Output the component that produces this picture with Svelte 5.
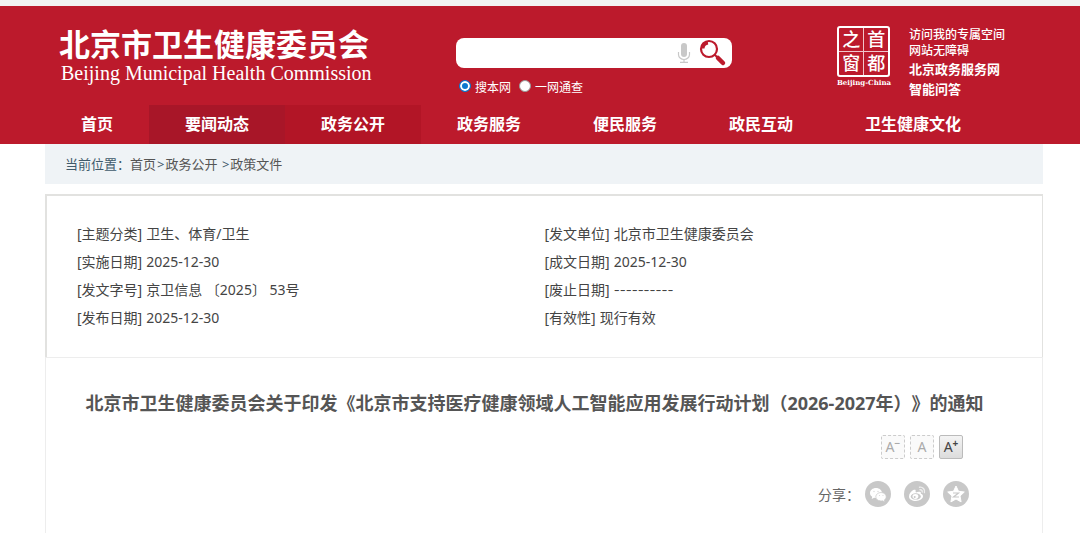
<script lang="ts">
	type NavItem = { label: string; state?: 'active' | 'near' };

	const navItems: NavItem[] = [
		{ label: '首页' },
		{ label: '要闻动态', state: 'active' },
		{ label: '政务公开', state: 'near' },
		{ label: '政务服务' },
		{ label: '便民服务' },
		{ label: '政民互动' },
		{ label: '卫生健康文化' }
	];

	const docInfo = [
		{ label: '主题分类', value: '卫生、体育/卫生' },
		{ label: '发文单位', value: '北京市卫生健康委员会' },
		{ label: '实施日期', value: '2025-12-30' },
		{ label: '成文日期', value: '2025-12-30' },
		{ label: '发文字号', value: '京卫信息 〔2025〕 53号' },
		{ label: '废止日期', value: '----------' },
		{ label: '发布日期', value: '2025-12-30' },
		{ label: '有效性', value: '现行有效' }
	];

	let keyword = $state('');
	let scope = $state('site');
	let fontSize = $state('large');
</script>

<header class="site-header">
	<div class="inner masthead">
		<a class="brand" href="/">
			<span class="brand-cn">北京市卫生健康委员会</span>
			<span class="brand-en">Beijing Municipal Health Commission</span>
		</a>

		<form class="search" onsubmit={(e) => e.preventDefault()}>
			<div class="search-box">
				<input class="keyword" type="text" aria-label="搜索" bind:value={keyword} />
				<button class="icon-btn" type="button" aria-label="语音">
					<svg width="14" height="22" viewBox="0 0 14 22" fill="none">
						<rect x="4" y="1" width="6" height="14" rx="3" fill="#c8c8c8" />
						<path d="M1.5 10v2.5a5.5 5 0 0 0 11 0V10M7 17.5V20M3 20.3h8" stroke="#c8c8c8" stroke-width="1.2" />
					</svg>
				</button>
				<button class="icon-btn" type="submit" aria-label="搜索">
					<svg width="28" height="28" viewBox="0 0 28 28" fill="none">
						<circle cx="10" cy="10" r="8" stroke="#bc1a2c" stroke-width="2.2" />
						<path d="M4 9.500a6 6 0 0 1 5-5.500" stroke="#bc1a2c" stroke-width="3" />
						<path d="M15.500 15.500l3 3" stroke="#bc1a2c" stroke-width="2" />
						<path d="M19 19l5 5" stroke="#bc1a2c" stroke-width="4.500" stroke-linecap="round" />
					</svg>
				</button>
			</div>
			<div class="scopes">
				<label><input type="radio" name="scope" value="site" bind:group={scope} />搜本网</label>
				<label><input type="radio" name="scope" value="all" bind:group={scope} />一网通查</label>
			</div>
		</form>

		<a class="seal" href="/capital">
			<span class="seal-grid">
				<span>之</span><span>首</span><span>窗</span><span>都</span>
			</span>
			<span class="seal-name">Beijing-China</span>
		</a>

		<div class="portal-links">
			<a href="/space">访问我的专属空间</a>
			<a href="/accessible">网站无障碍</a>
			<a class="strong" href="/services">北京政务服务网</a>
			<a class="strong" href="/ask">智能问答</a>
		</div>
	</div>

	<nav class="inner nav">
		{#each navItems as item}
			<a href="/" class={item.state}>{item.label}</a>
		{/each}
	</nav>
</header>

<main class="inner">
	<div class="breadcrumb">
		<span>当前位置：</span><a href="/">首页</a><i>&gt;</i><a href="/open">政务公开</a>&nbsp;<i>&gt;</i><a href="/policy">政策文件</a>
	</div>

	<dl class="doc-info">
		{#each docInfo as row}
			<div>
				<dt>[{row.label}]</dt>
				<dd class:blank={row.value.startsWith('---')}>{row.value}</dd>
			</div>
		{/each}
	</dl>

	<article>
		<h1>北京市卫生健康委员会关于印发《北京市支持医疗健康领域人工智能应用发展行动计划（2026-2027年）》的通知</h1>

		<div class="font-sizes">
			<button class:on={fontSize === 'small'} onclick={() => fontSize = 'small'}>A<sup>−</sup></button>
			<button class:on={fontSize === 'normal'} onclick={() => fontSize = 'normal'}>A</button>
			<button class:on={fontSize === 'large'} onclick={() => fontSize = 'large'}>A<sup>+</sup></button>
		</div>

		<div class="share">
			<span>分享：</span>
			<a href="/share/wechat" aria-label="微信">
				<svg width="26" height="26" viewBox="0 0 26 26">
					<circle cx="13" cy="13" r="13" fill="#c8c8c8" />
					<path d="M11 7c-3.400 0-6 2.200-6 5 0 1.600.8 2.900 2.200 3.800L6.700 18l2.500-1.300c.6.2 1.200.3 1.800.3 3.400 0 6-2.200 6-5s-2.600-5-6-5z" fill="#fff" />
					<path d="M16 11.500c-2.900 0-5.200 1.900-5.200 4.300s2.300 4.200 5.200 4.200c.6 0 1.100-.1 1.600-.2l2.200 1.200-.5-2c1.200-.8 1.900-1.900 1.900-3.200 0-2.400-2.300-4.300-5.200-4.300z" fill="#fff" stroke="#c8c8c8" stroke-width=".7" />
					<g fill="#d8d8d8">
						<circle cx="9" cy="10.500" r=".7" />
						<circle cx="13" cy="10.500" r=".7" />
						<circle cx="14.500" cy="14.500" r=".6" />
						<circle cx="18" cy="14.500" r=".6" />
					</g>
				</svg>
			</a>
			<a href="/share/weibo" aria-label="微博">
				<svg width="26" height="26" viewBox="0 0 26 26" fill="none">
					<circle cx="13" cy="13" r="13" fill="#c8c8c8" />
					<path d="M11.500 10.200c.8-1.500-.6-2-2.300-1.100C7 10.300 5 13 5 15.500 5 18.300 8.200 20 11.800 20c4 0 7.200-2.200 7.200-4.700 0-1.500-1-2.200-2.200-2.500.6-1.600-.4-2.200-1.900-2.100-1 .1-1.900.4-2.900.7z" fill="#fff" />
					<ellipse cx="11.800" cy="15.400" rx="5" ry="3.200" fill="#c8c8c8" />
					<ellipse cx="11.400" cy="15.500" rx="2.900" ry="2.400" fill="#fff" />
					<circle cx="10.700" cy="15.900" r="1" fill="#c8c8c8" />
					<path d="M15.500 6.200c3.200-.6 5.800 2.200 4.900 5.300M16 8.700c1.500-.2 2.500 1 2.200 2.300" stroke="#eee" stroke-width="1.400" stroke-linecap="round" />
				</svg>
			</a>
			<a href="/share/qzone" aria-label="QQ空间">
				<svg width="26" height="26" viewBox="0 0 26 26" fill="none">
					<circle cx="13" cy="13" r="13" fill="#c8c8c8" />
					<path d="M13 5l2.500 5.300 5.800.7-4.300 4 1.100 5.900L13 18l-5.100 2.900L9 15l-4.300-4 5.800-.7z" fill="#fff" stroke="#fff" stroke-linejoin="round" />
					<path d="M10 12h5.500l-5 4h5.500" stroke="#c8c8c8" stroke-width="1.200" />
				</svg>
			</a>
		</div>
	</article>
</main>

<style>
	:global(body) {
		margin: 0;
		background: #fff;
		color: #444;
		font-family: 'Noto Sans', 'Noto Sans CJK SC', sans-serif;
		font-size: 14px;
		text-spacing-trim: space-all;
	}

	a {
		color: inherit;
		text-decoration: none;
	}

	button,
	input {
		font-family: inherit;
	}

	.inner {
		margin: 0 37px 0 45px;
	}

	.site-header {
		border-top: 6px solid #f2f2f2;
		background: #bc1a2c;
		color: #fff;
	}

	.masthead {
		display: flex;
		align-items: flex-start;
		height: 99px;
		padding-left: 14px;
	}

	.brand {
		display: flex;
		flex: 1;
		flex-direction: column;
		padding-top: 20px;
		white-space: nowrap;
	}

	.brand-cn {
		font-size: 31px;
		font-weight: 700;
		line-height: 36px;
	}

	.brand-en {
		padding-left: 2px;
		font-family: 'Liberation Serif', serif;
		font-size: 20px;
		line-height: 22px;
	}

	.search {
		width: 276px;
		padding-top: 32px;
	}

	.search-box {
		display: flex;
		align-items: center;
		gap: 8px;
		height: 30px;
		padding: 0 5px 0 8px;
		border-radius: 8px;
		background: #fff;
	}

	.keyword {
		flex: 1;
		min-width: 0;
		border: 0;
		outline: none;
		font-size: 14px;
	}

	.icon-btn {
		display: flex;
		padding: 0;
		border: 0;
		background: none;
		cursor: pointer;
	}

	.scopes {
		display: flex;
		gap: 8px;
		padding: 10px 0 0 3px;
		font-size: 12px;
		line-height: 20px;
	}

	.scopes label {
		display: flex;
		align-items: center;
		gap: 4px;
	}

	.scopes input {
		appearance: none;
		box-sizing: border-box;
		width: 12px;
		height: 12px;
		margin: 0 0 4px;
		border: 1px solid #999;
		border-radius: 50%;
		background: #fff;
	}

	.scopes input:checked {
		border-color: #0b78d0;
		background: #0b78d0;
		box-shadow: inset 0 0 0 2px #fff;
	}

	.seal {
		display: flex;
		flex-direction: column;
		align-items: center;
		width: 58px;
		margin-left: 103px;
		padding-top: 20px;
	}

	.seal-grid {
		display: grid;
		grid-template-columns: 1fr 1fr;
		box-sizing: border-box;
		width: 53px;
		height: 51px;
		border: 2px solid #fff;
		border-radius: 3px;
		font-size: 18px;
		font-weight: 500;
		line-height: 23px;
		text-align: center;
	}

	.seal-grid span:nth-child(odd) {
		border-right: 1px solid #f0c4ca;
	}

	.seal-grid span:nth-child(-n + 2) {
		border-bottom: 1px solid #f0c4ca;
	}

	.seal-name {
		font-family: 'DejaVu Serif', serif;
		font-size: 7px;
		font-weight: 700;
		line-height: 12px;
	}

	.portal-links {
		display: flex;
		flex-direction: column;
		padding: 21px 38px 0 16px;
		font-size: 12px;
		font-weight: 500;
		line-height: 16px;
		white-space: nowrap;
	}

	.portal-links .strong {
		font-size: 13px;
		font-weight: 700;
		line-height: 20px;
	}

	.nav {
		display: flex;
	}

	.nav a {
		padding: 0 36px;
		font-size: 16px;
		font-weight: 700;
		line-height: 39px;
	}

	.nav .active {
		background: #a81628;
	}

	.nav .near {
		background: #b21526;
	}

	.breadcrumb {
		margin-bottom: 10px;
		padding-left: 20px;
		background: #eff3f6;
		color: #3f5a6b;
		font-size: 13px;
		line-height: 40px;
	}

	.breadcrumb a {
		color: #555;
	}

	.breadcrumb i {
		padding: 0 1px;
		font-style: normal;
	}

	.doc-info {
		display: grid;
		grid-template-columns: 1fr 1fr;
		margin: 0;
		padding: 24px 30px 25px;
		border: solid #e2e2e0;
		border-width: 2px 1px 0 2px;
		line-height: 28px;
	}

	.doc-info div {
		display: flex;
		gap: 4px;
	}

	.doc-info dd {
		margin: 0;
	}

	.doc-info .blank {
		font-family: Inter, sans-serif;
		font-size: 13px;
	}

	article {
		padding: 30px 0 32px;
		border: 1px solid #ededed;
		border-bottom: 0;
	}

	h1 {
		margin: 0;
		padding: 0 40px 0 21px;
		color: #555;
		font-size: 18px;
		font-weight: 700;
		line-height: 30px;
		text-align: center;
	}

	.font-sizes {
		display: flex;
		justify-content: flex-end;
		gap: 5px;
		padding: 17px 79px 0 0;
	}

	.font-sizes button {
		display: flex;
		align-items: center;
		justify-content: center;
		width: 24px;
		height: 24px;
		padding: 0;
		border: 1px dashed #ccc;
		border-radius: 2px;
		background: #fafafa;
		color: #aaa;
		font-size: 14px;
		line-height: 22px;
		cursor: pointer;
	}

	.font-sizes .on {
		border: 1px solid #bbb;
		background: linear-gradient(#f4f4f4, #dcdcdc);
		color: #444;
	}

	.font-sizes sup {
		padding-bottom: 8px;
		font-size: 10px;
		font-weight: 700;
		line-height: 12px;
	}

	.share {
		display: flex;
		align-items: center;
		justify-content: flex-end;
		gap: 13px;
		padding: 22px 73px 0 0;
		color: #666;
	}

	.share span {
		margin-right: -8px;
	}

	.share a {
		display: flex;
	}
</style>
